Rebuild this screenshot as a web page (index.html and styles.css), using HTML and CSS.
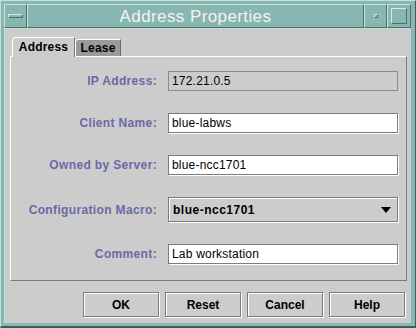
FILE: index.html
```html
<!DOCTYPE html>
<html>
<head>
<meta charset="utf-8">
<link rel="stylesheet" href="styles.css">
</head>
<body>
<div class="window">
  <div class="titlebar">
    <div class="tb-btn menu-btn"><span class="dash"></span></div>
    <div class="title">Address Properties</div>
    <div class="tb-btn min-btn"><span class="dot"></span></div>
    <div class="tb-btn max-btn"><span class="square"></span></div>
  </div>
  <div class="client">
    <div class="tabs">
      <div class="tab tab-active">Address</div>
      <div class="tab tab-inactive">Lease</div>
    </div>
    <div class="panel">
      <div class="form">
        <div class="label">IP Address:</div>
        <div class="field field-ro">172.21.0.5</div>
        <div class="label">Client Name:</div>
        <div class="field">blue-labws</div>
        <div class="label">Owned by Server:</div>
        <div class="field">blue-ncc1701</div>
        <div class="label">Configuration Macro:</div>
        <div class="combo"><span class="combo-text">blue-ncc1701</span><span class="arrow"></span></div>
        <div class="label">Comment:</div>
        <div class="field">Lab workstation</div>
      </div>
    </div>
    <div class="buttons">
      <div class="btn">OK</div>
      <div class="btn">Reset</div>
      <div class="btn">Cancel</div>
      <div class="btn">Help</div>
    </div>
  </div>
</div>
</body>
</html>
```
FILE: styles.css
```css
html, body {
  margin: 0;
  padding: 0;
  background: #88b6b0;
}
.window {
  width: 416px;
  height: 328px;
  box-sizing: border-box;
  background: #88b6b0;
  border: 1px solid;
  border-color: #c2e0da #3c5c57 #3c5c57 #c2e0da;
  border-bottom-width: 2px;
  padding: 3px 4px 3px 3px;
  display: flex;
  flex-direction: column;
  font-family: "Liberation Sans", Arial, sans-serif;
}
.titlebar {
  height: 24px;
  display: flex;
  flex: none;
}
.tb-btn, .title {
  box-sizing: border-box;
  border: 1px solid;
  border-color: #c8e4de #4e6e69 #4e6e69 #c8e4de;
  height: 24px;
  display: flex;
  align-items: center;
  justify-content: center;
}
.menu-btn { width: 23px; }
.min-btn { width: 23px; }
.max-btn { width: 24px; }
.title {
  flex: 1;
  color: #f4f4f4;
  font-size: 17px;
  letter-spacing: 0.4px;
  padding-top: 1px;
}
.dash {
  width: 15px;
  height: 4px;
  box-sizing: border-box;
  border: 1px solid;
  border-color: #d0ece6 #4e6e69 #4e6e69 #d0ece6;
}
.dot {
  width: 4px;
  height: 4px;
  box-sizing: border-box;
  border: 1px solid;
  border-color: #d0ece6 #4e6e69 #4e6e69 #d0ece6;
}
.square {
  width: 16px;
  height: 16px;
  box-sizing: border-box;
  border: 1px solid;
  border-color: #d0ece6 #4e6e69 #4e6e69 #d0ece6;
}
.client {
  flex: 1;
  background: #cccccc;
  border-left: 1px solid #c2e0da;
  border-top: 1px solid #c2e0da;
  padding: 8px 4px 5px 5px;
  display: flex;
  flex-direction: column;
}
.tabs {
  display: flex;
  align-items: flex-end;
  height: 19px;
  padding-left: 2px;
}
.tab {
  box-sizing: border-box;
  font-size: 12px;
  font-weight: bold;
  color: #000;
  display: flex;
  align-items: center;
  justify-content: center;
  letter-spacing: 0.2px;
}
.tab-active {
  width: 63px;
  height: 20px;
  background: #cccccc;
  border-top: 1px solid #ffffff;
  border-left: 1px solid #ffffff;
  border-right: 1px solid #7a7a7a;
  border-top-left-radius: 4px;
  margin-bottom: -1px;
  position: relative;
  z-index: 1;
  padding-bottom: 1px;
}
.tab-inactive {
  width: 46px;
  height: 17px;
  background: #9a9a9a;
  border-top: 1px solid #ffffff;
  border-left: 1px solid #ffffff;
  border-right: 1px solid #6a6a6a;
  border-top-left-radius: 3px;
}
.panel {
  height: 225px;
  box-sizing: border-box;
  border: 1px solid;
  border-color: #ffffff #7a7a7a #7a7a7a #ffffff;
}
.form {
  display: grid;
  grid-template-columns: 146px 230px;
  column-gap: 11px;
  row-gap: 22px;
  padding-top: 14px;
  align-items: center;
}
.label {
  text-align: right;
  font-size: 12px;
  font-weight: bold;
  color: #6a6aa6;
  letter-spacing: 0.35px;
}
.field {
  box-sizing: border-box;
  height: 20px;
  background: #ffffff;
  border: 1px solid #7c7c7c;
  box-shadow: 1px 1px 0 #ffffff;
  font-size: 12px;
  color: #000;
  padding-left: 3px;
  display: flex;
  align-items: center;
  letter-spacing: 0.2px;
}
.field-ro {
  background: #cccccc;
  border-color: #8a8a8a;
  box-shadow: none;
}
.combo {
  box-sizing: border-box;
  height: 25px;
  background: #cccccc;
  border: 1px solid #7c7c7c;
  box-shadow: inset 1px 1px 0 #ffffff, 1px 1px 0 #ffffff;
  display: flex;
  align-items: center;
  justify-content: space-between;
  padding: 0 6px 0 4px;
}
.combo-text {
  font-size: 12px;
  font-weight: bold;
  color: #000;
  letter-spacing: 0.5px;
}
.arrow {
  width: 0;
  height: 0;
  border-left: 5px solid transparent;
  border-right: 5px solid transparent;
  border-top: 6px solid #000;
}
.buttons {
  display: flex;
  justify-content: flex-end;
  gap: 6px;
  margin-top: 11px;
  padding-right: 2px;
}
.btn {
  box-sizing: border-box;
  width: 76px;
  height: 25px;
  border: 1px solid #7c7c7c;
  box-shadow: inset 1px 1px 0 #ffffff, 1px 1px 0 #ffffff;
  font-size: 12px;
  font-weight: bold;
  color: #000;
  display: flex;
  align-items: center;
  justify-content: center;
}
```
